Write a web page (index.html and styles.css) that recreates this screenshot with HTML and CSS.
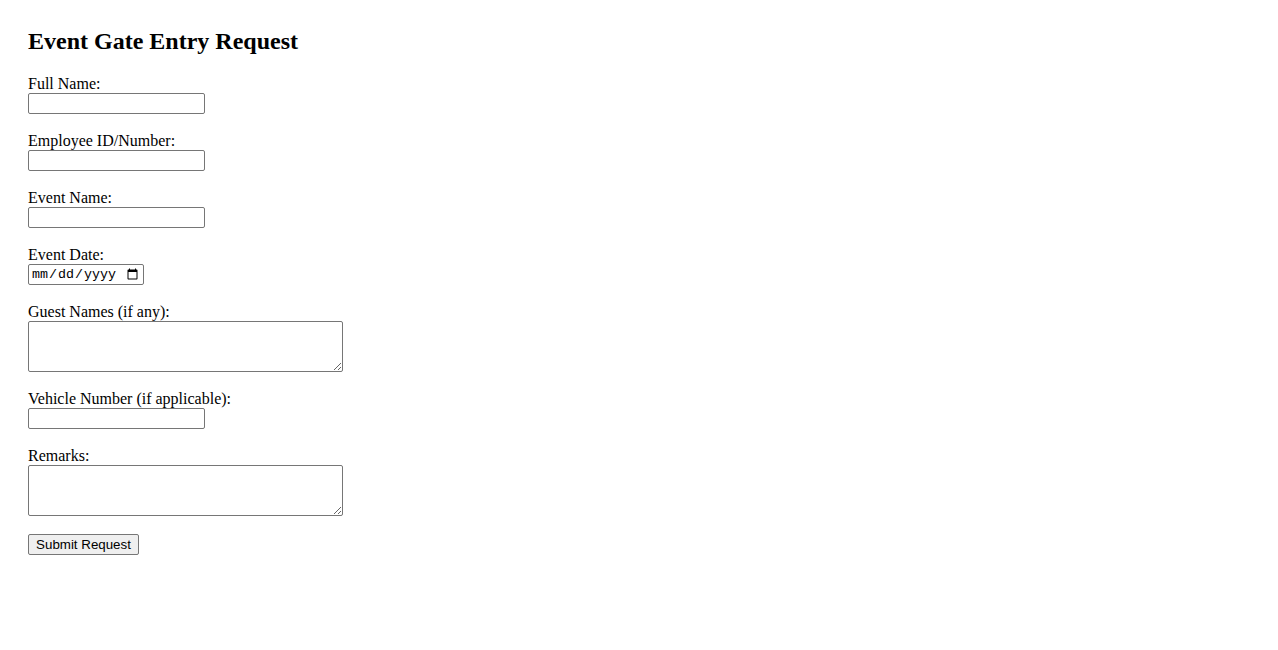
FILE: index.html
```html
<!DOCTYPE html>
<html lang="en">
<head>
<meta charset="utf-8">
<title>Event Gate Entry Request</title>
<link rel="stylesheet" href="styles.css">
</head>
<body>
<div class="page">
  <h2 class="title">Event Gate Entry Request</h2>
  <form class="entry-form">
    <label for="fullName">Full Name:</label><br>
    <input class="text-field" type="text" id="fullName"><br><br>

    <label for="empId">Employee ID/Number:</label><br>
    <input class="text-field" type="text" id="empId"><br><br>

    <label for="eventName">Event Name:</label><br>
    <input class="text-field" type="text" id="eventName"><br><br>

    <label for="eventDate">Event Date:</label><br>
    <input class="date-field" type="date" id="eventDate"><br><br>

    <label for="guests">Guest Names (if any):</label><br>
    <textarea class="area-field" id="guests" rows="3"></textarea><br><br>

    <label for="vehicle">Vehicle Number (if applicable):</label><br>
    <input class="text-field" type="text" id="vehicle"><br><br>

    <label for="remarks">Remarks:</label><br>
    <textarea class="area-field" id="remarks" rows="3"></textarea><br><br>

    <button class="submit-btn" type="submit">Submit Request</button>
  </form>
</div>
</body>
</html>
```

FILE: styles.css
```css
body {
  margin: 8px;
  font-family: "Liberation Serif", "Times New Roman", serif;
  font-size: 16px;
  color: #000;
  background: #fff;
}

.page {
  padding: 20px;
}

.title {
  margin: 0 0 19.92px 0;
  font-size: 24px;
  font-weight: bold;
}

.entry-form {
  margin: 0;
}

.text-field {
  box-sizing: border-box;
  width: 177px;
  height: 21px;
  margin: 0;
  padding: 1px 2px;
  border: 1px solid #767676;
  border-radius: 2px;
  font-family: "Liberation Sans", Arial, sans-serif;
  font-size: 13.333px;
  vertical-align: baseline;
}

.date-field {
  box-sizing: border-box;
  width: 116px;
  height: 21px;
  margin: 0;
  padding: 1px 2px;
  border: 1px solid #767676;
  border-radius: 2px;
  font-family: "Liberation Mono", monospace;
  font-size: 13.333px;
}

.area-field {
  box-sizing: border-box;
  width: 315px;
  height: 51px;
  margin: 0 0 -1px 0;
  padding: 2px;
  border: 1px solid #767676;
  border-radius: 2px;
  font-family: "Liberation Mono", monospace;
  font-size: 13.333px;
  vertical-align: text-bottom;
}

.submit-btn {
  box-sizing: border-box;
  height: 21px;
  width: 111px;
  margin: 0;
  padding: 1px 6px;
  border: 1px solid #767676;
  border-radius: 2px;
  background: #efefef;
  font-family: "Liberation Sans", Arial, sans-serif;
  font-size: 13.333px;
  color: #000;
}
```
